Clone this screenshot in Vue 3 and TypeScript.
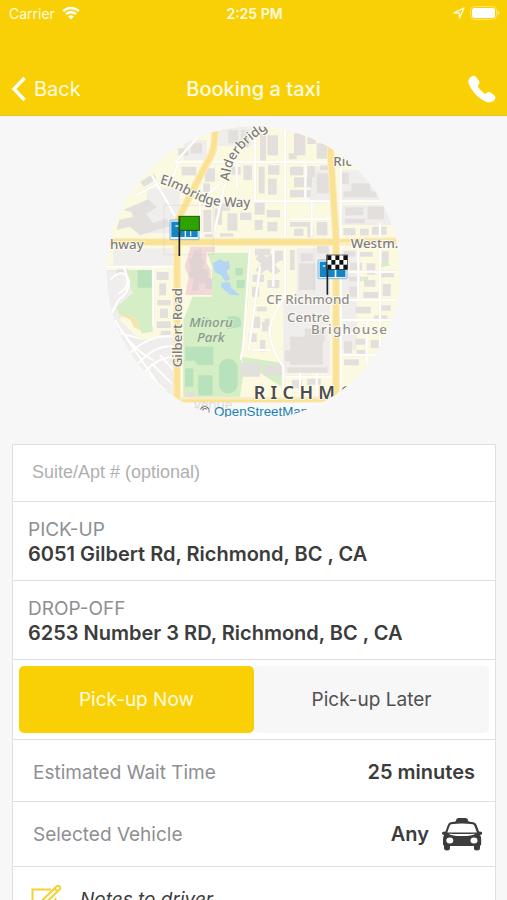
<script setup lang="ts">
import { ref } from 'vue'

type Box = [x: number, y: number, w: number, h: number]
type PickupMode = 'now' | 'later'

const suite = ref('')
const mode = ref<PickupMode>('now')

const addresses = [
  { label: 'PICK-UP', value: '6051 Gilbert Rd, Richmond, BC , CA' },
  { label: 'DROP-OFF', value: '6253 Number 3 RD, Richmond, BC , CA' },
]

const paved: Box[] = [
  [345, 18, 100, 60], [240, 60, 70, 60], [130, 205, 100, 135], [30, 385, 180, 50],
  [580, 385, 100, 150], [715, 150, 120, 90], [715, 255, 150, 60], [540, 540, 140, 220],
  [700, 390, 60, 300], [240, 720, 170, 120], [620, 140, 65, 100],
]

const buildings: Box[] = [
  [375, 30, 30, 40], [412, 30, 24, 52], [470, 30, 18, 92], [492, 46, 32, 60], [572, 40, 34, 66],
  [612, 44, 26, 28], [640, 70, 34, 46], [556, 100, 24, 18], [225, 85, 30, 22], [262, 70, 34, 30],
  [235, 140, 44, 26], [305, 145, 30, 40], [300, 190, 20, 26], [382, 140, 30, 24], [420, 136, 26, 44],
  [466, 140, 18, 80], [494, 136, 34, 28], [494, 176, 26, 48], [560, 140, 40, 26], [572, 172, 54, 30],
  [560, 210, 62, 22], [612, 138, 22, 34], [640, 160, 42, 60], [650, 136, 30, 14], [716, 158, 20, 34],
  [744, 190, 56, 34], [720, 214, 100, 18], [794, 150, 20, 40], [726, 262, 54, 24], [792, 260, 50, 38],
  [725, 296, 60, 14], [350, 250, 30, 22], [300, 270, 24, 66], [334, 266, 22, 48], [372, 280, 30, 52],
  [410, 278, 34, 22], [454, 240, 30, 44], [454, 300, 24, 30], [490, 270, 40, 22], [492, 306, 30, 28],
  [560, 306, 60, 14], [572, 326, 28, 22], [612, 318, 18, 34], [640, 306, 32, 40], [720, 324, 36, 22],
  [770, 326, 26, 20], [806, 320, 44, 24], [240, 290, 22, 16], [304, 342, 28, 10], [350, 340, 40, 10],
  [160, 456, 36, 24], [168, 490, 20, 36], [162, 540, 40, 16], [170, 566, 24, 28], [160, 604, 42, 20],
  [172, 632, 30, 14], [40, 448, 36, 16], [455, 386, 46, 20], [512, 392, 26, 30], [448, 464, 34, 22],
  [492, 480, 36, 24], [446, 500, 22, 30], [592, 400, 36, 24], [586, 430, 50, 80], [560, 650, 98, 84],
  [544, 690, 30, 34], [604, 626, 60, 40], [552, 742, 120, 16], [722, 394, 34, 16], [766, 396, 42, 14],
  [740, 428, 36, 24], [790, 430, 26, 34], [836, 394, 20, 32], [736, 470, 40, 14], [782, 480, 34, 20],
  [832, 456, 40, 16], [738, 500, 28, 30], [780, 516, 44, 18], [838, 492, 24, 36], [756, 560, 46, 20],
  [826, 556, 36, 16], [812, 586, 40, 14], [722, 664, 24, 36], [756, 656, 36, 18], [802, 660, 26, 24],
  [760, 690, 26, 14], [722, 718, 44, 18], [460, 560, 30, 14], [450, 590, 20, 34], [476, 606, 18, 28],
  [436, 640, 24, 26], [470, 660, 16, 34], [484, 596, 14, 22], [412, 728, 58, 42], [480, 736, 56, 30],
  [566, 780, 30, 24], [612, 776, 40, 18], [250, 818, 24, 20], [640, 376, 36, 24], [560, 390, 14, 60],
]

const minorRoads: string[] = [
  'M215 127H720', 'M450 244H900', 'M545 18V352', 'M545 380V540', 'M455 60V245',
  'M365 190L330 350', 'M460 18Q450 60 456 127', 'M290 350V245L350 190', 'M560 298H690',
  'M712 18V900', 'M100 225L212 165L225 127', 'M215 127L290 45', 'M145 165L222 300',
  'M10 440H215', 'M150 440V620', 'M440 380L420 680L412 720', 'M545 530Q495 600 500 650Q510 700 540 740V840',
  'M830 310V700', 'M700 455H880', 'M700 540H880', 'M715 640H870', 'M700 705H850', 'M545 770H700',
  'M765 360V540', 'M470 440L436 690', 'M510 380V500', 'M625 240V350', 'M606 127V240', 'M710 600H870',
  'M400 127V205', 'M450 690H500', 'M590 760V830', 'M640 760V830', 'M790 600V760', 'M45 520Q90 500 60 440',
  'M20 480Q60 440 76 480Q82 515 45 540L20 590', 'M35 600Q85 690 150 720', 'M80 700Q140 640 215 650',
  'M105 730Q160 670 215 680', 'M125 755Q165 710 215 710', 'M125 755L190 815', 'M145 730L205 790',
  'M170 705L215 755', 'M70 655L180 815', 'M50 640L110 655',
]

const checks: Box[] = []
for (let row = 0; row < 3; row++) {
  for (let col = 0; col < 5; col++) {
    if ((row + col) % 2 === 0) checks.push([672 + col * 12, 406 + row * 14, 12, 14])
  }
}
</script>

<template>
  <div class="screen">
    <header class="top">
      <div class="status">
        <div class="carrier">
          <span>Carrier</span>
          <svg class="wifi" viewBox="0 0 18 14" aria-hidden="true">
            <path d="M1.2 5.2a11.2 11.2 0 0 1 15.6 0" />
            <path d="M4 8.2a7.2 7.2 0 0 1 10 0" />
            <path class="fill" d="M6.2 10.6a4 4 0 0 1 5.6 0L9 13.6z" />
          </svg>
        </div>
        <span class="clock">2:25 PM</span>
        <div class="indicators">
          <svg class="locate" viewBox="0 0 12 12" aria-hidden="true"><path d="M1 5.8 11 1 6.6 11 6.2 6z" /></svg>
          <svg class="battery" viewBox="0 0 30 14" aria-hidden="true">
            <rect class="shell" x="0.5" y="0.5" width="26" height="13" rx="4" />
            <rect class="charge" x="2" y="2" width="23" height="10" rx="2.5" />
            <path class="tip" d="M27.5 4.5q2 .8 2 2.5t-2 2.5z" />
          </svg>
        </div>
      </div>
      <nav class="nav">
        <button class="back" type="button">
          <svg viewBox="0 0 16 26" aria-hidden="true"><path d="M13.500 2 3 13l10.500 11" /></svg>
          <span>Back</span>
        </button>
        <h1>Booking a taxi</h1>
        <button class="call" type="button" aria-label="Call">
          <svg viewBox="0 0 28 28" aria-hidden="true">
            <path d="M2.200 2.400C4 .6 6.400.2 7.800 1.700l3.100 4c1.100 1.500.7 2.900-.5 4.200-.8.9-.6 1.700.1 2.700 1.600 2.300 3.200 4 5.300 5.600 1 .7 1.900.8 2.800-.1 1.200-1.200 2.800-1.500 4.200-.4l3.600 2.700c1.600 1.300 1.200 3.300-.3 4.800-2.300 2.300-5.200 2.800-8.700 1.200C9.800 22.700 4.600 17.300 1.200 9.800-.1 6.900.1 4.400 2.200 2.400z" />
          </svg>
        </button>
      </nav>
    </header>

    <main class="content">
      <div class="map">
        <svg viewBox="8 18 882 882" role="img" aria-label="Route map">
          <defs>
            <path id="elmbridge" d="M168 190C225 204 262 237 310 251Q370 266 470 258" />
            <path id="alderbridge" d="M378 184C382 124 404 84 500 22" />
            <clipPath id="disc"><circle cx="450" cy="459" r="440" /></clipPath>
          </defs>
          <g clip-path="url(#disc)">
            <rect class="ground" x="0" y="0" width="900" height="900" />
            <rect v-for="(b, i) in paved" :key="'p' + i" class="paved" :x="b[0]" :y="b[1]" :width="b[2]" :height="b[3]" />
            <path class="paved" d="M0 450H70L90 520L50 600L110 660L215 650V850H100L0 650z" />
            <path class="grass" d="M60 450H148V635L115 640 95 595 45 580 40 560 88 520z" />
            <path class="grass" d="M312 398H438L432 560 412 705 420 760 410 830H240V600L268 530H326V440z" />
            <path class="grass" d="M412 710 535 728V800L480 765 420 730z" />
            <path class="grass" d="M834 425l20-4 4 16-24 4zM778 470h16v14h-16z" />
            <path class="sand" d="M50 578 95 595 110 630 92 622 80 598 48 586z" />
            <path class="pitch" d="M103 450H145V503H103z" />
            <path class="pitch" d="M246 680H330V735H285L272 722H246zM245 745H270V800H245zM285 766H328V826H285zM280 595h40v24h-40zM372 590q50-10 40 30l-40 8zM396 444h22v22h-22zM400 480h24v24h-24z" />
            <rect class="pitch" x="347" y="716" width="56" height="104" rx="28" />
            <path class="water" d="M328 430l22-12 14 8 12-4 4 22-10 10 10 24-14 6-14-20-18-8zM354 488l24-2 6 18 26 22-30-2-26-22z" />
            <path class="hospital" d="M262 380H334V396H310V430L322 450 326 525H246L256 470 244 440z" />
            <path class="ward" d="M270 392l24-6v26l12 14-10 18 18 6v22l12 6v28h-20v-18l-20 4v20h-22l8-36-16-8 6-30-8-20 16-8z" />
            <rect v-for="(b, i) in buildings" :key="'b' + i" class="building" :x="b[0]" :y="b[1]" :width="b[2]" :height="b[3]" />
            <path class="building" d="M60 270 135 238 160 262 128 282 150 310 190 295 200 318 110 346 80 320 40 330 48 300 90 290 84 276zM110 186l42-26 8 18-38 22zM470 400l20 12 20-12 22 20-18 14 18 20-20 12-22-18-20 16-14-14 18-18-18-16z" />

            <path class="casing" :d="minorRoads.join('')" />
            <path class="road" :d="minorRoads.join('')" />

            <path class="main-casing" d="M335 18C335 70 332 98 310 130L228 290Q220 305 221 340V850M682 18V110L698 350V900" />
            <path class="main-casing" d="M0 366H700L900 362M215 842H560L760 838" />
            <path class="main wide" d="M335 18C335 70 332 98 310 130L228 290Q220 305 221 340V850" />
            <path class="main wide" d="M682 18V110L698 350V900" />
            <path class="main wide" d="M0 366H700" />
            <path class="main thin" d="M700 362H900M215 842H560L760 838" />

            <path class="parcel" d="M182 256H330V404H182zM632 376V520" />

            <g class="label">
              <text><textPath href="#elmbridge">Elmbridge Way</textPath></text>
              <text><textPath href="#alderbridge">Alderbridg</textPath></text>
              <text x="20" y="386">hway</text>
              <text x="742" y="384">Westm.</text>
              <text x="690" y="137">Ric</text>
              <text transform="translate(236 742) rotate(-90)">Gilbert Road</text>
            </g>
            <g class="label place">
              <text x="489" y="551">CF Richmond</text>
              <text x="551" y="607">Centre</text>
              <text class="spaced" x="623" y="641">Brighouse</text>
            </g>
            <g class="label park">
              <text x="258" y="621">Minoru</text>
              <text x="281" y="667">Park</text>
            </g>
            <text class="city" x="451" y="837">RICHMO</text>

            <rect class="strip" x="0" y="848" width="900" height="52" />
            <text class="ghost" x="272" y="868">venue</text>
            <text class="credit" x="268" y="889">| ©</text>
            <text class="credit link" x="332" y="889">OpenStreetMap</text>

            <g class="stop">
              <rect class="frame" x="200" y="300" width="87" height="59" rx="3" />
              <path class="plate" d="M204 305H244V351H204zM248 318H283V351H248z" />
              <path class="glyph" d="M216 318h12l6 7-8 10M262 334v15" />
            </g>
            <path class="pole" d="M228 288V408" />
            <rect class="flag" x="229" y="289" width="59" height="42" />

            <g class="stop">
              <rect class="frame" x="644" y="420" width="87" height="56" rx="3" />
              <path class="plate" d="M649 425H694V471H649zM699 438H726V471H699z" />
              <path class="glyph" d="M658 438h8" />
            </g>
            <path class="pole" d="M672 404V524" />
            <rect class="finish" x="671" y="405" width="61" height="43" />
            <rect v-for="(c, i) in checks" :key="'c' + i" class="check" :x="c[0]" :y="c[1]" :width="c[2]" :height="c[3]" />
          </g>
        </svg>
      </div>

      <form class="card" @submit.prevent>
        <div class="row suite">
          <input v-model="suite" type="text" placeholder="Suite/Apt # (optional)" aria-label="Suite or apartment number" />
        </div>
        <div v-for="a in addresses" :key="a.label" class="row address">
          <span class="caption">{{ a.label }}</span>
          <strong>{{ a.value }}</strong>
        </div>
        <div class="row toggle">
          <button type="button" :class="{ active: mode === 'now' }" @click="mode = 'now'">Pick-up Now</button>
          <button type="button" :class="{ active: mode === 'later' }" @click="mode = 'later'">Pick-up Later</button>
        </div>
        <div class="row pair">
          <span class="caption">Estimated Wait Time</span>
          <strong>25 minutes</strong>
        </div>
        <div class="row pair vehicle">
          <span class="caption">Selected Vehicle</span>
          <strong>Any</strong>
          <svg class="taxi" viewBox="0 0 40 34" aria-hidden="true">
            <path fill-rule="evenodd" d="M13.500 4.500 14.500 2Q15 1 17 1h6q2 0 2.500 1l1 2.500 5 .8q2.300.5 3.200 3l2.300 6.200 2 .2q1.400.3 1.400 1.600 0 1.200-1.400 1.400l-1 .2q1.200 1.500 1.200 4v5q0 1.500-1.200 1.800V31q0 2.500-3.200 2.500T32 31v-2H8v2q0 2.500-3 2.500T2 31v-2.300Q1 28.300 1 27v-5q0-2.500 1.200-4.100l-1-.2Q0 17.300 0 16.200q0-1.300 1.400-1.500l2.100-.2L5.700 8.300q.9-2.500 3-3zM9.300 7.300Q8.200 7.600 7.600 9L5.300 15.500h29.600L32.500 9q-.6-1.400-1.800-1.700Q20 5.700 9.300 7.300zM6.500 16.800q3 2.300 13.500 2.300t13.500-2.300q-13.500.6-27 0zM7.800 20.600a3.500 2.900 0 1 0 0 5.800 3.500 2.900 0 1 0 0-5.800zM32 20.600a3.500 2.900 0 1 0 0 5.800 3.500 2.900 0 1 0 0-5.800z" />
          </svg>
        </div>
        <button class="row notes" type="button">
          <svg viewBox="0 0 31 31" aria-hidden="true">
            <path d="M20 5.500H1.500v23h23V14" />
            <path d="M10 17.500 25.500 2.500q1.500-1.500 3 0t0 3L13 20.500l-5 2zM23.500 4.500l3 3" />
          </svg>
          <span>Notes to driver</span>
        </button>
      </form>
    </main>
  </div>
</template>

<style>
body {
  margin: 0;
  background: #f7f7f7;
}
</style>

<style scoped>
.screen {
  display: flex;
  flex-direction: column;
  height: 100vh;
  background: #f7f7f7;
  color: #3c3c3c;
  font-family: Inter, "Liberation Sans", sans-serif;
}

button {
  border: 0;
  padding: 0;
  background: none;
  color: inherit;
  font: inherit;
  cursor: pointer;
}

/* header */
.top {
  flex: none;
  background: #f9d006;
  border-bottom: 1px solid #e4c43a;
  color: #fffbe0;
}

.status,
.nav {
  display: grid;
  grid-template-columns: 1fr auto 1fr;
  align-items: center;
}

.status {
  height: 26px;
  padding: 0 7px 0 9px;
  font-size: 14px;
}

.carrier,
.indicators {
  display: flex;
  align-items: center;
  gap: 7px;
}

.indicators {
  justify-content: flex-end;
  gap: 5px;
}

.clock {
  font-size: 14px;
  font-weight: 600;
}

.wifi {
  width: 18px;
  height: 14px;
  fill: none;
  stroke: #fff;
  stroke-width: 2.4;
}

.wifi .fill {
  fill: #fff;
  stroke: none;
}

.locate {
  width: 12px;
  height: 12px;
  fill: none;
  stroke: #fffbe0;
  stroke-width: 1.3;
  stroke-linejoin: round;
}

.battery {
  width: 30px;
  height: 14px;
}

.shell {
  fill: none;
  stroke: #fce573;
}

.charge {
  fill: #fff;
}

.tip {
  fill: #fce573;
}

.nav {
  height: 52px;
  padding: 37px 11px 0;
  font-size: 20px;
}

h1 {
  margin: 0;
  font-size: 20px;
  font-weight: 500;
}

.back {
  display: flex;
  align-items: center;
  gap: 7px;
}

.back svg {
  width: 16px;
  height: 26px;
  fill: none;
  stroke: #fff;
  stroke-width: 3.4;
}

.call {
  justify-self: end;
  display: flex;
}

.call svg {
  width: 28px;
  height: 28px;
  fill: #fff;
}

/* scrolling area */
.content {
  flex: 1;
  min-height: 0;
  overflow-y: auto;
  scrollbar-width: none;
}

.map {
  display: flex;
  justify-content: center;
  padding: 10px 0 24px;
}

.map svg {
  width: 58%;
  aspect-ratio: 1;
}

/* map */
.ground { fill: #fbf9e0; }
.paved { fill: #f0eeed; }
.building { fill: #e3dfdc; }
.grass { fill: #d5eec6; }
.pitch { fill: #b7e2bb; }
.sand { fill: #f6e2ad; }
.water { fill: #b5d5f5; }
.hospital { fill: #f2d8d8; }
.ward { fill: #e1d2d3; }

.casing,
.road,
.main,
.main-casing,
.parcel,
.pole {
  fill: none;
}

.casing { stroke: #efece2; stroke-width: 8; }
.road { stroke: #fff; stroke-width: 6; }
.main-casing { stroke: #f8ecc4; stroke-width: 23; }
.main { stroke: #fbe192; }
.wide { stroke-width: 16; }
.thin { stroke-width: 8; }
.parcel { stroke: #cfcccb; stroke-width: 1; }

.label {
  fill: #7c7c7c;
  stroke: #fffdf2;
  stroke-width: 5;
  paint-order: stroke;
  font-family: "Noto Sans", sans-serif;
  font-size: 40px;
  font-weight: 500;
}

.place { fill: #8f8d8f; }
.spaced { letter-spacing: 4px; }
.park { fill: #8a9a8e; font-style: italic; stroke: #d9efcb; }

.city {
  fill: #4c4c4c;
  stroke: #fffdf2;
  stroke-width: 5;
  paint-order: stroke;
  font-family: "Noto Sans", sans-serif;
  font-size: 54px;
  font-weight: 600;
  letter-spacing: 16px;
}

.strip { fill: #f9f9f8; }

.ghost {
  fill: #dddad7;
  font-family: "Noto Sans", sans-serif;
  font-size: 40px;
}

.credit {
  fill: #444;
  font-family: "Liberation Sans", sans-serif;
  font-size: 40px;
}

.link { fill: #1781b5; }
.frame { fill: #e8f3fa; stroke: #4a9fd0; stroke-width: 2; }
.plate { fill: #1583c4; }
.glyph { fill: none; stroke: #cfe6f5; stroke-width: 4; }
.pole { stroke: #222; stroke-width: 5; }
.flag { fill: #2ea200; stroke: #1c5a05; stroke-width: 3; }
.finish { fill: #fff; stroke: #222; stroke-width: 2; }
.check { fill: #111; }

/* booking card */
.card {
  margin: 0 11px 24px 12px;
  border: 1px solid #dfdfdf;
  background: #fff;
}

.row {
  box-sizing: border-box;
  border-bottom: 1px solid #dfdfdf;
}

.suite {
  height: 57px;
}

.suite input {
  box-sizing: border-box;
  width: 100%;
  height: 100%;
  border: 0;
  padding: 0 19px 2px;
  background: transparent;
  color: #3c3c3c;
  font: 18px "Liberation Sans", sans-serif;
}

.suite input::placeholder {
  color: #afafb1;
  opacity: 1;
}

.caption {
  color: #8e8f93;
  font-size: 19px;
}

strong {
  font-size: 20px;
  font-weight: 600;
}

.address {
  display: flex;
  flex-direction: column;
  justify-content: center;
  height: 79px;
  padding: 2px 15px 0;
  line-height: 24px;
}

.toggle {
  display: grid;
  grid-template-columns: 1fr 1fr;
  height: 80px;
  padding: 6px;
}

.toggle button {
  border-radius: 5px;
  background: #f7f7f7;
  color: #505053;
  font-size: 19px;
}

.toggle button.active {
  background: #f9d006;
  color: #fffbe0;
}

.pair {
  display: flex;
  align-items: center;
  height: 62px;
  padding: 3px 20px 0;
}

.pair .caption {
  flex: 1;
}

.vehicle {
  height: 65px;
  padding: 0 13px 0 20px;
}

.taxi {
  width: 40px;
  height: 34px;
  margin-left: 13px;
  fill: #3c3c3c;
}

.notes {
  display: flex;
  align-items: center;
  gap: 18px;
  width: 100%;
  height: 64px;
  border-bottom: 0;
  padding: 0 18px;
  font-size: 19px;
  font-style: italic;
}

.notes svg {
  width: 31px;
  height: 31px;
  fill: none;
  stroke: #f3d232;
  stroke-width: 2;
}
</style>
